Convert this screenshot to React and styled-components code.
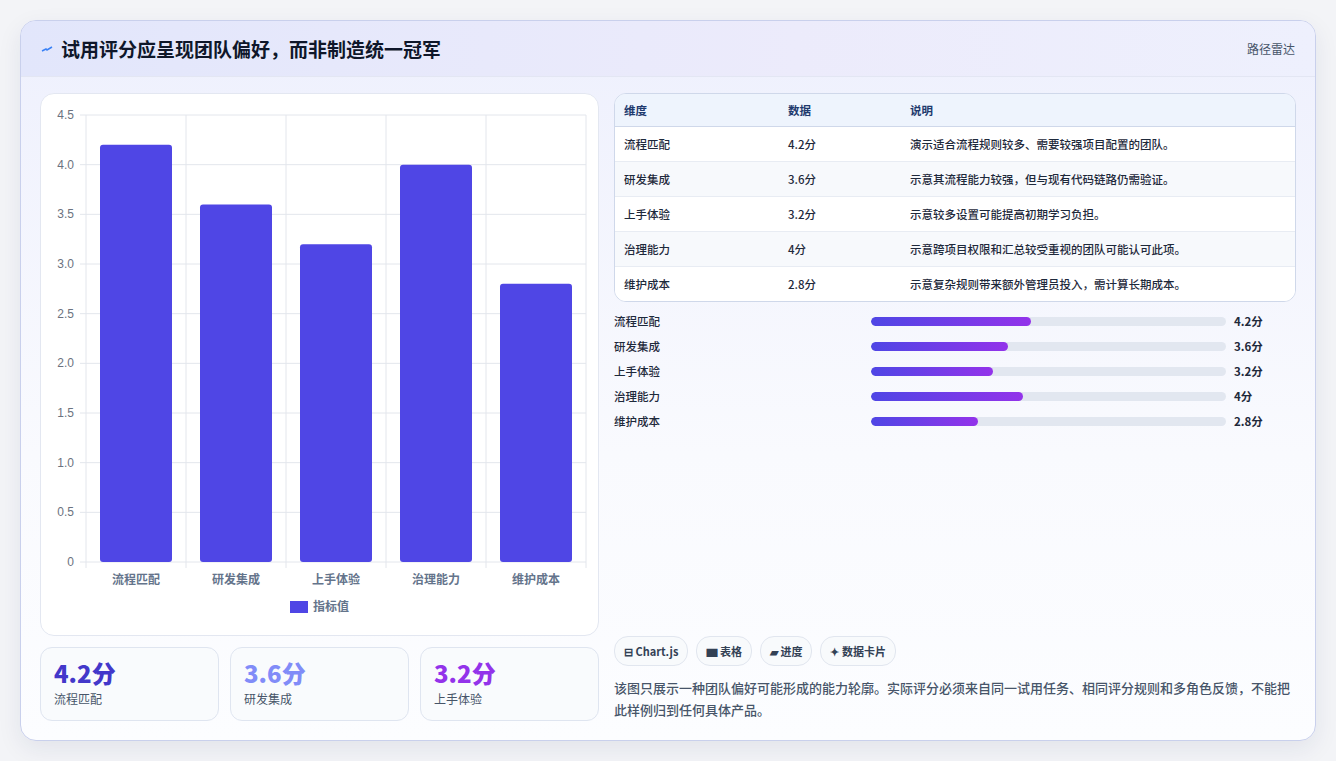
import React from "react";
import styled, { createGlobalStyle } from "styled-components";

const Global = createGlobalStyle`
  body { margin: 0; background: #f3f4f7; font-family: "Noto Sans CJK SC", "Noto Sans", sans-serif; color: #1e293b; }
`;
const Page = styled.div`padding: 20px 20px 20px 20px; height: 761px; box-sizing: border-box;`;
const Card = styled.div`
  height: 721px; box-sizing: border-box; border: 1px solid #c9d0ec; border-radius: 16px;
  background: linear-gradient(180deg, #eef0fd 0%, #f9fafe 60%, #fcfdff 100%);
  box-shadow: 0 8px 24px rgba(30,40,90,0.08); overflow: hidden; display: flex; flex-direction: column;
`;
const Header = styled.div`
  height: 55px; flex: none; display: flex; align-items: center; justify-content: space-between;
  padding: 0 20px; background: linear-gradient(90deg, #e2e6fb, #ecebfb 60%, #eef0fd);
  border-bottom: 1px solid #e3e6f3;
`;
const Title = styled.h1`margin: 0; font-size: 19px; font-weight: 700; color: #0f172a; display: flex; align-items: center; gap: 8px;`;
const Tag = styled.span`font-size: 12px; color: #475569;`;
const Body = styled.div`flex: 1; display: grid; grid-template-columns: 559px 1fr; gap: 15px; padding: 16px 19px 19px 19px;`;
const Col = styled.div`display: flex; flex-direction: column; min-width: 0;`;
const ChartCard = styled.div`height: 543px; background: #fff; border: 1px solid #e3e7f1; border-radius: 14px; box-sizing: border-box;`;
const Stats = styled.div`display: grid; grid-template-columns: repeat(3, 1fr); gap: 11px; margin-top: 11px;`;
const Stat = styled.div`height: 74px; box-sizing: border-box; border: 1px solid #dfe5f0; border-radius: 12px; background: #f9fbfd; padding: 10px 13px;`;
const StatVal = styled.div`font-size: 24px; font-weight: 800; line-height: 30px; color: ${p => p.c};`;
const StatLbl = styled.div`font-size: 12px; color: #475569; margin-top: 2px;`;
const Table = styled.table`width: 100%; border-collapse: collapse; font-size: 11.5px;`;
const TableWrap = styled.div`border: 1px solid #cfd8ea; border-radius: 12px; overflow: hidden; background: #fff;`;
const Th = styled.th`text-align: left; font-weight: 700; color: #1e3a6e; height: 32px; padding: 0 10px 0 9px; background: #eef4fd; border-bottom: 1px solid #cfd8ea;`;
const Td = styled.td`height: 34px; padding: 0 10px 0 9px; font-weight: 500; color: #1e293b; border-top: 1px solid #e8ecf3; background: ${p => p.alt ? "#f7f9fc" : "#fff"};`;
const Bars = styled.div`display: flex; flex-direction: column; gap: 9px; margin-top: 11px;`;
const BarRow = styled.div`display: grid; grid-template-columns: 257px 355px 1fr; align-items: center; height: 16px; font-size: 11.5px; font-weight: 500;`;
const Track = styled.div`height: 9px; border-radius: 5px; background: #e2e7f0; overflow: hidden;`;
const Fill = styled.div`height: 100%; border-radius: 5px; background: linear-gradient(90deg, #4f46e5, #9333ea);`;
const BarVal = styled.span`font-weight: 700; padding-left: 8px;`;
const Spacer = styled.div`flex: 1;`;
const Chips = styled.div`display: flex; gap: 8px;`;
const Chip = styled.span`height: 28px; padding: 0 9px; border: 1px solid #e1e6ef; border-radius: 14px; background: #f8fafc; display: inline-flex; align-items: center; gap: 4px; font-size: 11px; font-weight: 700; color: #334155;`;
const Note = styled.p`margin: 11px 0 0; font-size: 13px; font-weight: 500; line-height: 22px; color: #475569;`;

const data = [
  ["流程匹配", 4.2, "演示适合流程规则较多、需要较强项目配置的团队。"],
  ["研发集成", 3.6, "示意其流程能力较强，但与现有代码链路仍需验证。"],
  ["上手体验", 3.2, "示意较多设置可能提高初期学习负担。"],
  ["治理能力", 4, "示意跨项目权限和汇总较受重视的团队可能认可此项。"],
  ["维护成本", 2.8, "示意复杂规则带来额外管理员投入，需计算长期成本。"],
];

function Chart() {
  const L = 45, T = 21, B = 468, W = 500, H = B - T;
  const ticks = [0, 0.5, 1, 1.5, 2, 2.5, 3, 3.5, 4, 4.5];
  const y = v => B - (v / 4.5) * H;
  return (
    <svg width="557" height="541" style={{ display: "block", fontFamily: "Liberation Sans, Noto Sans CJK SC, sans-serif" }}>
      {ticks.map(t => (
        <g key={t}>
          <line x1={L - 6} x2={L + W} y1={y(t)} y2={y(t)} stroke="#e3e6ec" />
          <text x={L - 12} y={y(t) + 4} textAnchor="end" fontSize="12" fill="#6b7280">{t === 0 ? "0" : t.toFixed(1)}</text>
        </g>
      ))}
      {[0, 1, 2, 3, 4, 5].map(i => <line key={i} x1={L + i * 100} x2={L + i * 100} y1={T} y2={B + 6} stroke="#e3e6ec" />)}
      {data.map((d, i) => (
        <g key={d[0]}>
          <rect x={L + i * 100 + 14} y={y(d[1])} width="72" height={B - y(d[1])} rx="3" fill="#4f46e5" />
          <text x={L + i * 100 + 50} y={B + 22} textAnchor="middle" fontSize="12" fontWeight="700" fill="#64748b">{d[0]}</text>
        </g>
      ))}
      <rect x="249" y="507" width="18" height="12" fill="#4f46e5" />
      <text x="272" y="517" fontSize="12" fontWeight="700" fill="#64748b">指标值</text>
    </svg>
  );
}

export default function App() {
  return (
    <Page>
      <Global />
      <Card>
        <Header>
          <Title>
            <svg width="12" height="10" viewBox="0 0 12 10"><path d="M1 7 L5 5 L6 6 L11 3" stroke="#3b82f6" strokeWidth="1.5" fill="none" /></svg>
            试用评分应呈现团队偏好，而非制造统一冠军
          </Title>
          <Tag>路径雷达</Tag>
        </Header>
        <Body>
          <Col>
            <ChartCard><Chart /></ChartCard>
            <Stats>
              <Stat><StatVal c="#4338ca">4.2分</StatVal><StatLbl>流程匹配</StatLbl></Stat>
              <Stat><StatVal c="#818cf8">3.6分</StatVal><StatLbl>研发集成</StatLbl></Stat>
              <Stat><StatVal c="#9333ea">3.2分</StatVal><StatLbl>上手体验</StatLbl></Stat>
            </Stats>
          </Col>
          <Col>
            <TableWrap>
              <Table>
                <thead><tr><Th style={{ width: 145 }}>维度</Th><Th style={{ width: 103 }}>数据</Th><Th>说明</Th></tr></thead>
                <tbody>
                  {data.map((d, i) => (
                    <tr key={d[0]}><Td alt={i % 2 === 1}>{d[0]}</Td><Td alt={i % 2 === 1}>{d[1]}分</Td><Td alt={i % 2 === 1}>{d[2]}</Td></tr>
                  ))}
                </tbody>
              </Table>
            </TableWrap>
            <Bars>
              {data.map(d => (
                <BarRow key={d[0]}>
                  <span>{d[0]}</span>
                  <Track><Fill style={{ width: `${(d[1] / 9.33) * 100}%` }} /></Track>
                  <BarVal>{d[1]}分</BarVal>
                </BarRow>
              ))}
            </Bars>
            <Spacer />
            <Chips>
              <Chip>⊟ Chart.js</Chip>
              <Chip>▆ 表格</Chip>
              <Chip>▰ 进度</Chip>
              <Chip>✦ 数据卡片</Chip>
            </Chips>
            <Note>该图只展示一种团队偏好可能形成的能力轮廓。实际评分必须来自同一试用任务、相同评分规则和多角色反馈，不能把此样例归到任何具体产品。</Note>
          </Col>
        </Body>
      </Card>
    </Page>
  );
}
